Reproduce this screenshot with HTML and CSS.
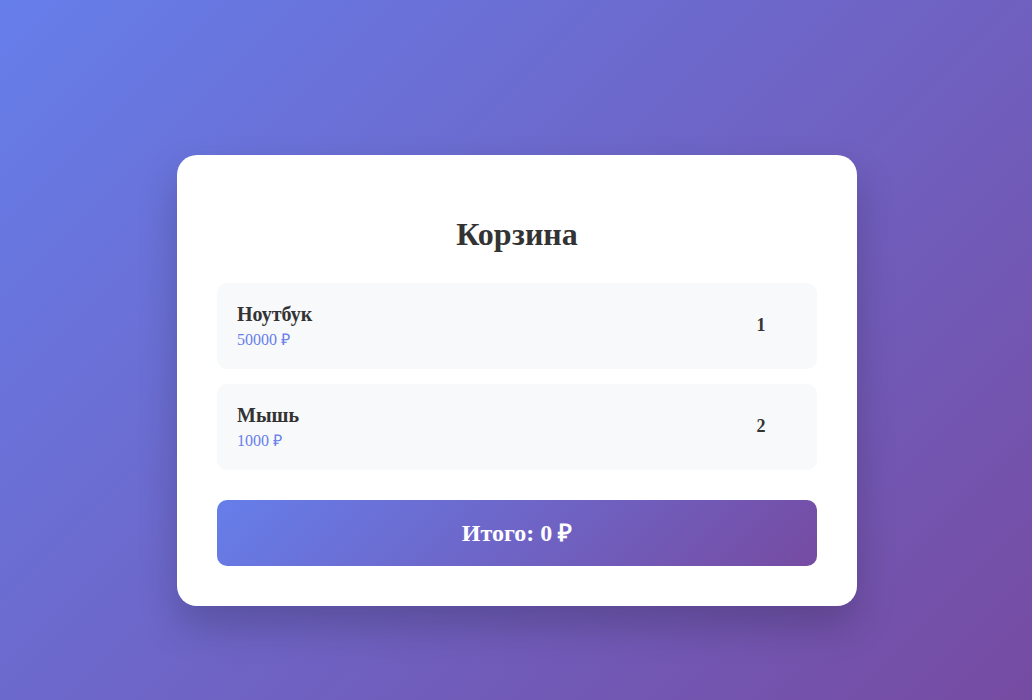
FILE: index.html
```html
<!DOCTYPE html>
<html lang="ru">
<head>
    <meta charset="UTF-8" />
    <title>Корзина</title>
    <link rel="stylesheet" href="styles.css">
</head>
<body>
    <div class="cart">
        <h1 class="cart-title">Корзина</h1>
        <ul class="items">
            <li class="item">
                <div class="item-info">
                    <div class="item-name">Ноутбук</div>
                    <div class="item-price">50000 ₽</div>
                </div>
                <span class="item-qty">1</span>
            </li>
            <li class="item">
                <div class="item-info">
                    <div class="item-name">Мышь</div>
                    <div class="item-price">1000 ₽</div>
                </div>
                <span class="item-qty">2</span>
            </li>
        </ul>
        <div class="total">Итого: 0 ₽</div>
    </div>
</body>
</html>
```

FILE: styles.css
```css
* {
    margin: 0;
    padding: 0;
    box-sizing: border-box;
}
ul {
    list-style: none;
}
body {
    min-height: 100vh;
    padding: 60px 0 0 2px;
    display: flex;
    justify-content: center;
    align-items: center;
    font-family: "Liberation Serif", "Times New Roman", serif;
    color: #333;
    background: linear-gradient(135deg, #667eea 0%, #764ba2 100%);
}
.cart {
    width: 680px;
    padding: 40px;
    background-color: #fff;
    border-radius: 20px;
    box-shadow: 0 20px 40px rgba(0,0,0,.2);
}
.cart-title {
    margin: 21px 0 30px;
    font-size: 32px;
    line-height: 37px;
    text-align: center;
    color: #333;
}
.items {
    display: flex;
    flex-direction: column;
    gap: 15px;
}
.item {
    display: flex;
    align-items: center;
    justify-content: space-between;
    padding: 20px;
    background-color: #f8f9fa;
    border-radius: 10px;
}
.item-name {
    font-size: 20px;
    line-height: 23px;
    font-weight: bold;
    margin-bottom: 5px;
}
.item-price {
    font-size: 16px;
    line-height: 18px;
    color: #667eea;
}
.item-qty {
    width: 72px;
    text-align: center;
    font-size: 18px;
    font-weight: bold;
}
.total {
    margin-top: 30px;
    padding: 20px;
    border-radius: 10px;
    text-align: center;
    font-size: 24px;
    line-height: 26px;
    font-weight: bold;
    color: #fff;
    background: linear-gradient(135deg, #667eea 0%, #764ba2 100%);
}
```
